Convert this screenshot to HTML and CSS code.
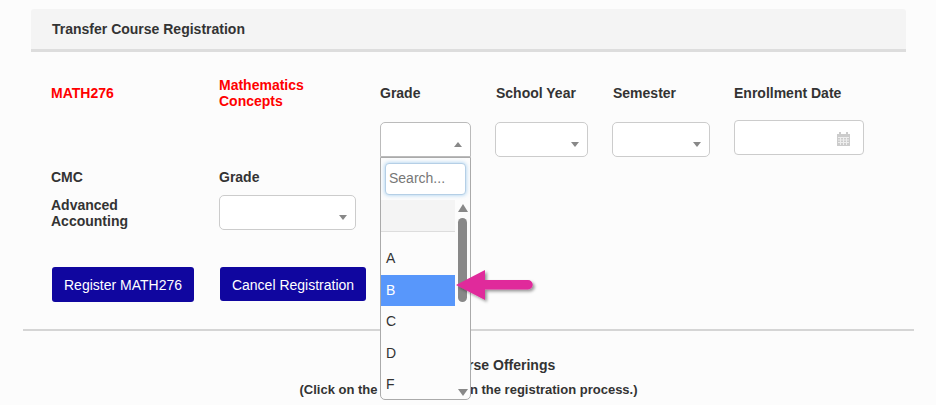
FILE: index.html
```html
<!DOCTYPE html>
<html lang="en">
<head>
    <meta charset="UTF-8">
    <title>Transfer Course Registration</title>
    <link rel="stylesheet" href="styles.css">
</head>
<body>
    <div class="page">
        <div class="panel-heading">Transfer Course Registration</div>
        <div class="panel-body">
            <div class="row row-first">
                <div class="col col-code">
                    <div class="label red">MATH276</div>
                </div>
                <div class="col col-name">
                    <div class="label red">Mathematics Concepts</div>
                </div>
                <div class="col col-grade">
                    <div class="label">Grade</div>
                    <div class="select open">
                        <div class="dropdown">
                            <input class="search" type="text" placeholder="Search...">
                            <div class="dropdown-list">
                                <ul class="options">
                                    <li class="empty"></li>
                                    <li>A</li>
                                    <li class="active">B</li>
                                    <li>C</li>
                                    <li>D</li>
                                    <li>F</li>
                                </ul>
                                <div class="scrollbar">
                                    <div class="scroll-up"></div>
                                    <div class="scroll-thumb"></div>
                                    <div class="scroll-down"></div>
                                </div>
                            </div>
                        </div>
                    </div>
                </div>
                <div class="col col-year">
                    <div class="label">School Year</div>
                    <div class="select"></div>
                </div>
                <div class="col col-semester">
                    <div class="label">Semester</div>
                    <div class="select"></div>
                </div>
                <div class="col col-date">
                    <div class="label">Enrollment Date</div>
                    <div class="date-input">
                        <svg class="calendar" width="13" height="14" viewBox="0 0 13 14">
                            <path d="M2 0h2v2h5V0h2v2h2v12H0V2h2z" fill="#ccc"/>
                            <path d="M1 5.5h11M1 8h11M1 10.5h11M3.5 5v8M6.5 5v8M9.5 5v8" stroke="#eee" stroke-width="1"/>
                        </svg>
                    </div>
                </div>
            </div>

            <div class="row row-second">
                <div class="col col-code">
                    <div class="plain-label">CMC</div>
                    <div class="plain-label course-name">Advanced Accounting</div>
                </div>
                <div class="col col-transfer">
                    <div class="plain-label">Grade</div>
                    <div class="select"></div>
                </div>
            </div>

            <div class="buttons">
                <a href="#" class="button button-register">Register MATH276</a>
                <a href="#" class="button button-cancel">Cancel Registration</a>
            </div>
        </div>

        <hr class="divider">

        <div class="offerings">
            <h2>Transfer Course Offerings</h2>
            <p>(Click on the course to begin the registration process.)</p>
        </div>
    </div>

    <!-- callout arrow pointing at the selected grade -->
    <svg class="callout" width="90" height="40" viewBox="0 0 90 40">
        <defs>
            <filter id="arrow-shadow" x="-20%" y="-30%" width="140%" height="170%">
                <feDropShadow dx="2" dy="2" stdDeviation="1.5" flood-color="#000" flood-opacity="0.4"/>
            </filter>
        </defs>
        <path d="M3 17 L32 2 V12 H75 A4.5 4.5 0 0 1 75 21.5 H32 V32 Z" fill="#e02b9b" filter="url(#arrow-shadow)"/>
    </svg>
</body>
</html>
```

FILE: styles.css
```css
/* CSS Styles */
body {
    font-family: 'Liberation Sans', Arial, sans-serif;
    font-size: 14px;
    line-height: 16px;
    color: #333;
    background-color: #fcfcfc;
    margin: 0;
    padding: 0;
    overflow: hidden;
    position: relative;
    height: 405px;
}
.page {
    width: 891px;
    padding-top: 9px;
    margin-left: 23px;
}
.panel-heading {
    margin: 0 8px;
    padding: 12px 21px 0;
    height: 28px;
    background-color: #f4f4f4;
    border-bottom: 3px solid #ddd;
    border-radius: 3px 3px 0 0;
    font-weight: bold;
}
.panel-body {
    padding: 25px 0 0 28px;
}
.row {
    display: flex;
    align-items: flex-start;
}
.row-second {
    margin-top: 12px;
}
.col-code {
    width: 168px;
}
.col-name {
    width: 161px;
}
.col-grade {
    width: 116px;
}
.col-year {
    width: 117px;
}
.col-semester {
    width: 121px;
}
.col-date {
    width: 130px;
}
.col-transfer {
    width: 137px;
}
.label {
    display: flex;
    align-items: center;
    height: 32px;
    font-weight: bold;
    margin-bottom: 13px;
}
.plain-label {
    font-weight: bold;
}
.course-name {
    margin-top: 12px;
    width: 100px;
}
.col-transfer .select {
    margin-top: 10px;
    width: 137px;
}
.red {
    color: #f00;
}
.col-name .label {
    width: 110px;
}
.select {
    position: relative;
    box-sizing: border-box;
    height: 35px;
    background-color: #fff;
    border: 1px solid #ccc;
    border-radius: 5px;
}
.select::after {
    content: "";
    position: absolute;
    right: 8px;
    top: 19px;
    border-style: solid;
    border-width: 5px 4px 0 4px;
    border-color: #888 transparent transparent transparent;
}
.col-grade .select {
    width: 91px;
}
.col-year .select {
    width: 93px;
    margin-left: -1px;
}
.col-semester .select {
    width: 98px;
    margin-left: -1px;
}
.select.open {
    border-color: #bbb;
    border-radius: 5px 5px 0 0;
}
.select.open::after {
    right: 8px;
    border-width: 0 4px 5px 4px;
    border-color: transparent transparent #888 transparent;
}
.dropdown {
    position: absolute;
    top: 34px;
    left: -1px;
    width: 91px;
    height: 243px;
    box-sizing: border-box;
    padding-top: 5px;
    background-color: #fcfcfc;
    border: 1px solid #aaa;
    border-radius: 0 0 5px 5px;
    z-index: 10;
    overflow: hidden;
}
.search {
    display: block;
    box-sizing: border-box;
    width: 81px;
    height: 32px;
    margin-left: 4px;
    padding: 0 3px 2px;
    font-family: 'Liberation Sans', Arial, sans-serif;
    font-size: 14px;
    background-color: #fff;
    border: 1px solid #b5cfe6;
    border-radius: 4px;
    box-shadow: 0 0 4px rgba(102, 175, 233, 0.6);
    outline: none;
}
.search::placeholder {
    color: #777;
}
.dropdown-list {
    display: flex;
    margin-top: 5px;
}
.options {
    list-style: none;
    margin: 0;
    padding: 0;
    width: 74px;
}
.options li {
    height: 31.5px;
    line-height: 30px;
    padding-left: 5px;
    color: #333;
}
.options li.empty {
    height: 31px;
    margin-bottom: 11px;
    background-color: #f4f4f4;
    border-bottom: 1px solid #ddd;
}
.options li.active {
    background-color: #5897fb;
    color: #fff;
}
.scrollbar {
    position: relative;
    flex: 1;
}
.scroll-up, .scroll-down {
    position: absolute;
    left: 3px;
    border-style: solid;
}
.scroll-up {
    top: 4px;
    border-width: 0 5px 8px 5px;
    border-color: transparent transparent #888 transparent;
}
.scroll-down {
    top: 189px;
    border-width: 7px 5px 0 5px;
    border-color: #888 transparent transparent transparent;
}
.scroll-thumb {
    position: absolute;
    top: 18px;
    left: 3px;
    width: 9px;
    height: 84px;
    background-color: #888;
    border-radius: 5px;
}
.date-input {
    position: relative;
    box-sizing: border-box;
    width: 130px;
    height: 35px;
    margin-top: -2px;
    background-color: #fff;
    border: 1px solid #ccc;
    border-radius: 4px;
}
.calendar {
    position: absolute;
    top: 11px;
    right: 13px;
}
.buttons {
    display: flex;
    align-items: flex-start;
    margin-top: 37px;
    margin-left: 1px;
}
.button {
    display: block;
    box-sizing: border-box;
    background-color: #10069f;
    color: #fff;
    text-align: center;
    text-decoration: none;
    border-radius: 3px;
    padding: 10px 0;
}
.button-register {
    width: 142px;
    height: 35px;
    margin-right: 26px;
}
.button-cancel {
    width: 146px;
    height: 34px;
}
.divider {
    height: 2px;
    margin: 27px 0 0;
    background-color: #d5d5d5;
    border: none;
}
.offerings {
    margin-top: 26px;
    text-align: center;
    font-weight: bold;
}
.offerings h2 {
    font-size: 14px;
    line-height: 16px;
    margin: 0;
}
.offerings p {
    font-size: 13px;
    margin: 9px 0 0;
}
.callout {
    position: absolute;
    left: 453px;
    top: 268px;
    z-index: 20;
}
```
